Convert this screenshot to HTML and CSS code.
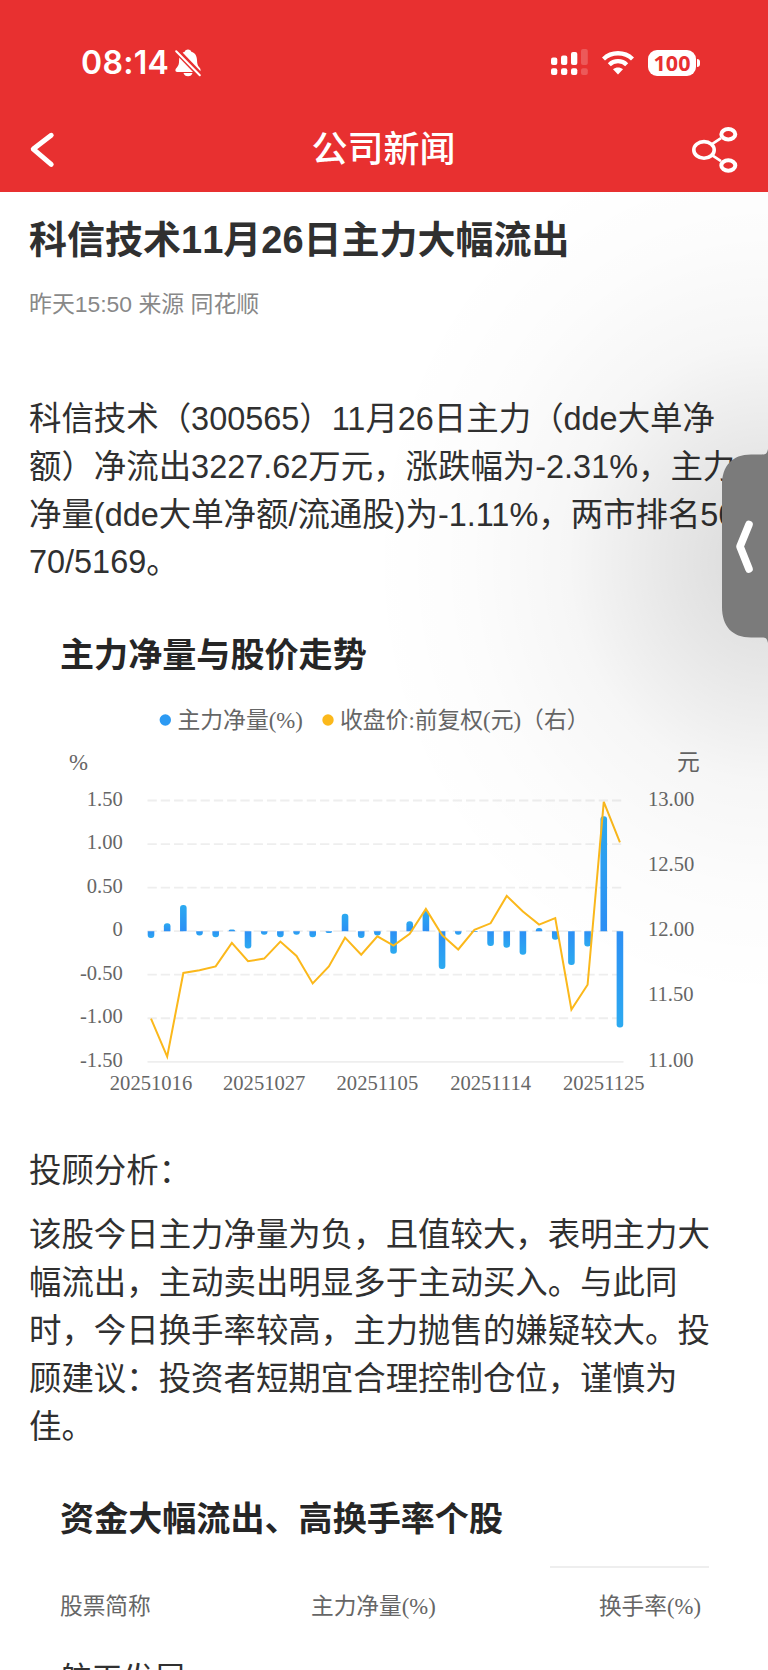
FILE: index.html
```html
<!DOCTYPE html>
<html lang="zh-CN">
<head>
    <meta charset="UTF-8">
    <meta name="viewport" content="width=device-width, initial-scale=1.0">
    <title>公司新闻</title>
    <link rel="stylesheet" href="styles.css">
</head>
<body>
    <header class="header">
        <div class="status-bar">
            <div class="status-left">
                <span class="time">08:14</span>
                <svg class="bell" width="26" height="28" viewBox="0 0 26 28">
                    <path d="M13 .5c1.800 0 3 1 3.300 2.200 4 1.200 5.500 4.300 5.700 8.300.1 4 .7 5.500 2.200 7.300 1 1.200 1.500 2 1.300 3.200-.2 1-1 1.500-2 1.500H2.200C1 23 .4 22.300.4 21.300c0-1.600 1-2.300 2-3.600 1.300-1.600 1.600-3 1.700-6.700.2-4 1.800-7 5.600-8.300C10 1.500 11.200.5 13 .5z" fill="#fff"/>
                    <path d="M8.500 24h9c-.5 2-2.200 3.300-4.500 3.300S9 26 8.500 24z" fill="#fff"/>
                    <path d="M0 0l26 27" stroke="#e83030" stroke-width="6"/>
                    <path d="M1.200 2.200l23.600 24" stroke="#fff" stroke-width="2" stroke-linecap="round"/>
                </svg>
            </div>
            <div class="status-right">
                <svg width="38" height="27" viewBox="0 0 38 27" fill="#fff">
                    <rect x="0" y="8.500" width="6.300" height="7.500" rx="2"/>
                    <rect x="10" y="6.500" width="6.300" height="9.500" rx="2"/>
                    <rect x="20" y="3" width="6.300" height="13" rx="2"/>
                    <rect x="30" y="0" width="6.800" height="16" rx="2" opacity=".2"/>
                    <rect x="0" y="19.300" width="6.300" height="6.800" rx="2"/>
                    <rect x="10" y="19.300" width="6.300" height="6.800" rx="2"/>
                    <rect x="20" y="19.300" width="6.300" height="6.800" rx="2"/>
                    <rect x="30" y="19.300" width="6.800" height="6.800" rx="2" opacity=".2"/>
                </svg>
                <svg class="wifi" width="32" height="24" viewBox="0 0 32 24">
                    <path d="M1.500 8C9.500.4 22.500.4 30.500 8" fill="none" stroke="#fff" stroke-width="4.400"/>
                    <path d="M7.300 13.700C12 9 20 9 24.700 13.700" fill="none" stroke="#fff" stroke-width="4.200"/>
                    <path d="M11 18.300c2.900-2.400 7.100-2.400 10 0L16 23.600z" fill="#fff"/>
                </svg>
                <div class="battery">100</div>
            </div>
        </div>
        <nav class="nav">
            <svg width="48" height="48" viewBox="0 0 48 48">
                <path d="M22.200 9.300L4.300 23.100 22.200 38.300" fill="none" stroke="#fff" stroke-width="5" stroke-linecap="round" stroke-linejoin="round"/>
            </svg>
            <h1 class="nav-title">公司新闻</h1>
            <svg width="48" height="48" viewBox="0 0 48 48" fill="none" stroke="#fff">
                <path d="M20 18.200l9-6M20 29.200l9 6" stroke-width="2.600"/>
                <ellipse cx="12" cy="23.900" rx="10.200" ry="8.300" stroke-width="3.600"/>
                <ellipse cx="36.300" cy="8.200" rx="7" ry="5.200" stroke-width="4"/>
                <ellipse cx="36.300" cy="39.500" rx="7" ry="5.200" stroke-width="4"/>
            </svg>
        </nav>
    </header>

    <main class="article">
        <h2 class="title">科信技术11月26日主力大幅流出</h2>
        <div class="meta">昨天15:50 来源 同花顺</div>
        <p class="text">科信技术（300565）11月26日主力（dde大单净<br>额）净流出3227.62万元，涨跌幅为-2.31%，主力<br>净量(dde大单净额/流通股)为-1.11%，两市排名50<br>70/5169。</p>

        <section class="block">
            <h3 class="block-title">主力净量与股价走势</h3>
            <svg class="chart" id="chart" width="768" height="420" viewBox="0 0 768 420">
                <defs>
                    <linearGradient id="up" x1="0" y1="0" x2="0" y2="1">
                        <stop offset="0" stop-color="#2caaf0"/>
                        <stop offset="1" stop-color="#2c8ff5"/>
                    </linearGradient>
                    <linearGradient id="down" x1="0" y1="0" x2="0" y2="1">
                        <stop offset="0" stop-color="#2c8ff5"/>
                        <stop offset="1" stop-color="#2caaf0"/>
                    </linearGradient>
                </defs>
                <circle cx="165.300" cy="30" r="5.700" fill="#2c9af3"/>
                <text class="legend" x="177.500" y="38">主力净量(%)</text>
                <circle cx="328" cy="30" r="5.700" fill="#fbb81b"/>
                <text class="legend" x="340" y="38">收盘价:前复权(元)（右）</text>
                <text class="legend" x="69" y="80">%</text>
                <text class="legend" x="677" y="80">元</text>
            </svg>
        </section>

        <p class="text">投顾分析：</p>
        <p class="text analysis">该股今日主力净量为负，且值较大，表明主力大<br>幅流出，主动卖出明显多于主动买入。与此同<br>时，今日换手率较高，主力抛售的嫌疑较大。投<br>顾建议：投资者短期宜合理控制仓位，谨慎为<br>佳。</p>

        <section class="block stocks">
            <h3 class="block-title">资金大幅流出、高换手率个股</h3>
            <div class="table-head">
                <span class="col-name">股票简称</span>
                <span class="col-flow">主力净量(%)</span>
                <span class="col-rate">换手率(%)</span>
            </div>
            <div class="stock-name">航天发展</div>
        </section>
        <div class="shade"></div>
    </main>

    <svg class="handle" width="46" height="194" viewBox="0 0 46 194">
        <path d="M46 0C45 4.500 44 5.500 40 5.500H29C10 5.500 0 17 0 36V158C0 177 10 188.500 29 188.500H40C44 188.500 45 189.500 46 194Z" fill="#7b7b7b"/>
        <path d="M27 75.500L18 97.500 27 120" fill="none" stroke="#fff" stroke-width="7.600" stroke-linecap="round" stroke-linejoin="round"/>
    </svg>

    <script>
        // 主力净量(%) 与 收盘价(元)
        var flow = [-0.08, 0.09, 0.30, -0.05, -0.07, 0.02, -0.20, -0.04, -0.07, -0.04,
            -0.07, -0.02, 0.20, -0.08, -0.05, -0.26, 0.115, 0.23, -0.435, -0.04,
            -0.01, -0.17, -0.19, -0.27, 0.035, -0.10, -0.39, -0.175, 1.32, -1.105];
        var price = [11.33, 11.04, 11.68, 11.70, 11.73, 11.91, 11.77, 11.79, 11.92, 11.81,
            11.60, 11.73, 11.95, 11.82, 11.96, 11.89, 11.98, 12.17, 11.97, 11.86,
            12.01, 12.06, 12.27, 12.15, 12.05, 12.10, 11.40, 11.59, 12.99, 12.68];
        var chart = document.getElementById("chart");
        var top0 = 110.5, plotH = 261.3, left = 147.5, step = 16.17;

        function add(name, attrs, text) {
            var el = document.createElementNS("http://www.w3.org/2000/svg", name);
            for (var key in attrs) {
                el.setAttribute(key, attrs[key]);
            }
            if (text) el.textContent = text;
            chart.appendChild(el);
        }

        function flowY(v) {
            return top0 + (1.5 - v) / 3 * plotH;
        }

        function priceY(v) {
            return top0 + (13 - v) / 2 * plotH;
        }

        // 网格线和左轴
        ["1.50", "1.00", "0.50", "0", "-0.50", "-1.00", "-1.50"].forEach(function (label, i) {
            var y = flowY(Number(label));
            add("line", { x1: left, x2: i == 6 ? 623.5 : 621.5, y1: y, y2: y, class: i == 6 ? "axis" : "grid" });
            add("text", { x: 122.8, y: y + 5, class: "tick end" }, label);
        });

        // 右轴
        ["13.00", "12.50", "12.00", "11.50", "11.00"].forEach(function (label) {
            add("text", { x: 648, y: priceY(Number(label)) + 5, class: "tick" }, label);
        });

        // 柱子，只有末端是圆角
        flow.forEach(function (v, i) {
            var x = 151 + i * step - 3.3, w = 6.6;
            var y0 = flowY(0), y1 = flowY(v);
            var r = Math.min(3, Math.abs(y1 - y0));
            var s = v > 0 ? -1 : 1;
            var d = "M" + x + " " + y0 + "V" + (y1 - s * r) +
                "Q" + x + " " + y1 + " " + (x + r) + " " + y1 +
                "H" + (x + w - r) +
                "Q" + (x + w) + " " + y1 + " " + (x + w) + " " + (y1 - s * r) +
                "V" + y0 + "Z";
            add("path", { d: d, fill: v > 0 ? "url(#up)" : "url(#down)" });
        });

        // 收盘价折线
        add("polyline", {
            class: "price-line",
            points: price.map(function (v, i) {
                return (151 + i * step) + "," + priceY(v);
            }).join(" ")
        });

        // 日期
        ["20251016", "20251027", "20251105", "20251114", "20251125"].forEach(function (label, i) {
            add("text", { x: 151 + i * 7 * step, y: 400, class: "tick middle" }, label);
        });
    </script>
</body>
</html>
```
FILE: styles.css
```css
* {
    box-sizing: border-box;
}

body {
    margin: 0;
    width: 768px;
    height: 1670px;
    overflow: hidden;
    position: relative;
    background-color: #fff;
    color: #303030;
    font-family: "Liberation Sans", "Noto Sans CJK SC", sans-serif;
}

h1, h2, h3, p {
    margin: 0;
}

.header {
    height: 191.5px;
    background-color: #e83030;
    color: #fff;
}

.status-bar {
    height: 125px;
    padding: 0 69px 0 81px;
    display: flex;
    justify-content: space-between;
    align-items: center;
}

.status-left {
    display: flex;
    align-items: center;
    gap: 6px;
}

.time {
    font-family: "Inter", sans-serif;
    font-size: 32px;
    font-weight: 600;
    letter-spacing: .3px;
    width: 88px;
    white-space: nowrap;
}

.status-right {
    display: flex;
    align-items: center;
}

.wifi {
    margin: 0 14px 0 13px;
}

.battery {
    position: relative;
    width: 48px;
    height: 26px;
    margin-right: 3px;
    border-radius: 9px;
    background-color: #fff;
    color: #e83030;
    font-family: "Open Sans", sans-serif;
    font-size: 21.5px;
    font-weight: 700;
    line-height: 26px;
    text-align: center;
}

.battery::after {
    content: "";
    position: absolute;
    right: -4px;
    top: 9px;
    width: 3px;
    height: 8px;
    border-radius: 0 4px 4px 0;
    background-color: #fff;
}

.nav {
    height: 50px;
    padding: 0 28px 0 29px;
    display: flex;
    justify-content: space-between;
    align-items: center;
}

.nav-title {
    margin-left: -2px;
    font-size: 36px;
    font-weight: 500;
    line-height: 50px;
}

.article {
    position: relative;
    height: 1478.5px;
    padding: 23.5px 0 0 29px;
    overflow: hidden;
    white-space: nowrap;
}

.title {
    font-size: 38px;
    line-height: 50px;
    font-weight: 700;
    font-kerning: none;
}

.meta {
    margin: 22.5px 0 76.5px;
    font-size: 22.9px;
    line-height: 32px;
    color: #888;
    font-kerning: none;
}

.text {
    font-size: 32.43px;
    line-height: 47.8px;
}

.analysis {
    margin-top: 17px;
}

.block {
    padding-left: 31px;
}

.block-title {
    margin-top: 43px;
    font-size: 34.1px;
    line-height: 50px;
    font-weight: 700;
    color: #262626;
}

.chart {
    display: block;
    margin: 9.5px 0 38px -60px;
}

.legend {
    font-family: "Liberation Serif", "Noto Sans CJK SC", serif;
    font-size: 22.8px;
    fill: #666;
}

.tick {
    font-family: "Liberation Serif", serif;
    font-size: 20.6px;
    fill: #666;
}

.end {
    text-anchor: end;
}

.middle {
    text-anchor: middle;
}

.grid {
    stroke: #eee;
    stroke-width: 1.8;
    stroke-dasharray: 9.3 3.97;
}

.axis {
    stroke: #eee;
    stroke-width: 1.8;
}

.price-line {
    fill: none;
    stroke: #fbb81b;
    stroke-width: 2;
}

.table-head {
    display: grid;
    grid-template-columns: 251px 238.5px 159.5px;
    margin-top: 22px;
    font-family: "Liberation Serif", "Noto Sans CJK SC", serif;
    font-size: 22.7px;
    line-height: 78px;
    color: #666;
}

.col-name,
.col-flow,
.col-rate {
    border-top: 2px solid transparent;
}

.col-rate {
    padding-right: 8px;
    border-top-color: #eee;
    text-align: right;
}

.stock-name {
    margin-top: 10.5px;
    font-size: 31.4px;
    line-height: 46px;
}

/* 右侧拉手投下的阴影 */
.shade {
    position: absolute;
    inset: 0;
    background: radial-gradient(ellipse 400px 440px at 768px 370px, rgba(0, 0, 0, .15), rgba(0, 0, 0, .095) 25%, rgba(0, 0, 0, .037) 50%, rgba(0, 0, 0, .01) 75%, transparent);
}

.handle {
    position: absolute;
    right: 0;
    top: 449px;
}
```
